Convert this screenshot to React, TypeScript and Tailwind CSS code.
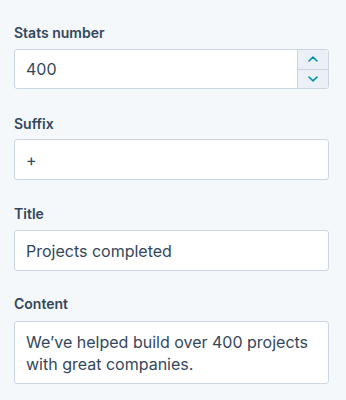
import React from "react";

const font = { fontFamily: "Inter, 'Noto Sans', sans-serif" };

function Label({ children }: { children: React.ReactNode }) {
  return (
    <div className="h-[20px] text-[14px] leading-[20px] font-semibold text-[#33475b]">
      {children}
    </div>
  );
}

export default function App() {
  return (
    <div
      className="w-[346px] h-[400px] bg-[#f5f8fa] pt-[23px] pl-[14px] pr-[17px] text-[#33475b]"
      style={font}
    >
      <Label>Stats number</Label>
      <div className="mt-[6px] h-[40px] flex bg-white border border-[#cbd6e2] rounded-[3px] overflow-hidden">
        <div className="flex-1 flex items-center px-[11px] text-[16px]">400</div>
        <div className="w-[31px] flex flex-col border-l border-[#cbd6e2] bg-[#eaf0f6]">
          <div className="flex-1 flex items-center justify-center border-b border-[#cbd6e2]">
            <svg width="10" height="6" viewBox="0 0 10 6" fill="none">
              <path d="M1 5 L5 1.2 L9 5" stroke="#0091ae" strokeWidth="1.6" strokeLinecap="round" strokeLinejoin="round" />
            </svg>
          </div>
          <div className="flex-1 flex items-center justify-center">
            <svg width="10" height="6" viewBox="0 0 10 6" fill="none">
              <path d="M1 1 L5 4.8 L9 1" stroke="#0091ae" strokeWidth="1.6" strokeLinecap="round" strokeLinejoin="round" />
            </svg>
          </div>
        </div>
      </div>

      <div className="mt-[25px]">
        <Label>Suffix</Label>
      </div>
      <div className="mt-[5px] h-[41px] flex items-center bg-white border border-[#cbd6e2] rounded-[3px] px-[11px] text-[16px]">
        +
      </div>

      <div className="mt-[24px]">
        <Label>Title</Label>
      </div>
      <div className="mt-[6px] h-[41px] flex items-center bg-white border border-[#cbd6e2] rounded-[3px] px-[11px] text-[16px]">
        Projects completed
      </div>

      <div className="mt-[23px]">
        <Label>Content</Label>
      </div>
      <div className="mt-[7px] h-[63px] bg-white border border-[#cbd6e2] rounded-[3px] px-[11px] pt-[9px] text-[16px] leading-[22px]">
        We’ve helped build over 400 projects with great companies.
      </div>
    </div>
  );
}
